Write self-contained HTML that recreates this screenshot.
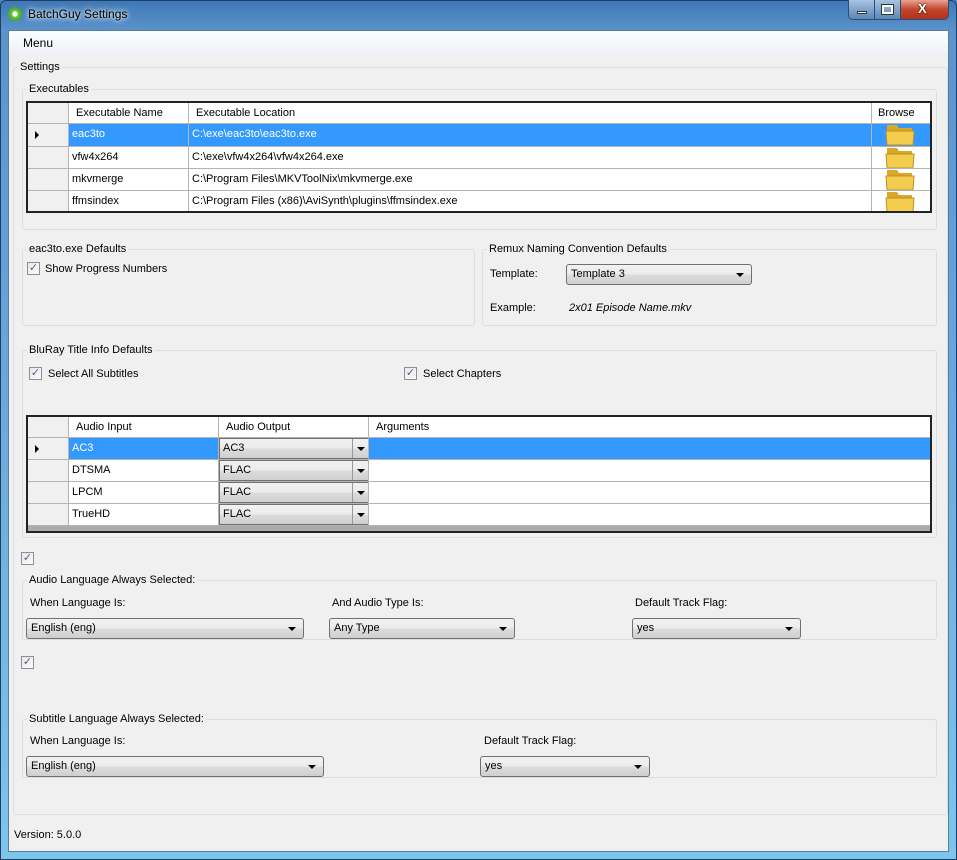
<!DOCTYPE html>
<html><head><meta charset="utf-8"><style>
*{box-sizing:border-box;margin:0;padding:0}
body{width:957px;height:860px;position:relative;overflow:hidden;font-family:"Liberation Sans",Arial,sans-serif;font-size:11px;color:#000;background:#4a86c0}
.a{position:absolute}
.frame{left:0;top:0;width:957px;height:860px;background:linear-gradient(180deg,#3f78b5 0,#5b93cb 30px,#6aa9dc 400px,#7cc6ec 860px);border:1px solid #1d3f66;border-radius:6px 6px 0 0}
.client{left:8px;top:30px;width:941px;height:822px;background:#f0f0f0;border:1px solid #5a7c9f}
.menu{left:9px;top:31px;width:939px;height:22px;background:linear-gradient(#fdfdfe,#eef2f7)}
.gb{position:absolute;border:1px solid #d5dfe5;border-radius:3px}
.gl{position:absolute;background:#f0f0f0;padding:0 2px;white-space:nowrap;line-height:14px}
.grid{position:absolute;border:2px solid #222;background:#ababab;overflow:hidden}
.row{position:absolute;left:0;height:23px;width:100%}
.c{position:absolute;top:0;height:100%;border-right:1px solid #b4b4b4;border-bottom:1px solid #b4b4b4;padding-left:3px;line-height:21px;white-space:nowrap;overflow:hidden;background:#fff}
.hdr .c{background:#fff;padding-left:7px}
.sel .c{background:#3399ff;color:#fff}
.sel .c.rh{background:#a6d2f6}
.rh{background:#f0f0f0!important}
.cb{position:absolute;width:13px;height:13px;border:1px solid #8e8f8f;background:linear-gradient(135deg,#e8e8e8,#fbfbfb);font-size:11px;line-height:11px;text-align:center;color:#4a5f97}
.combo{position:absolute;height:21px;border:1px solid #707070;border-radius:3px;background:linear-gradient(#f2f2f2 0,#ebebeb 50%,#dddddd 51%,#cfcfcf 100%);padding-left:4px;line-height:19px}
.combo:after{content:"";position:absolute;right:7px;top:8px;border-left:4px solid transparent;border-right:4px solid transparent;border-top:4px solid #000}
.gc{position:absolute;top:0;height:21px;border:1px solid #707070;background:linear-gradient(#f2f2f2 0,#ebebeb 50%,#dddddd 51%,#cfcfcf 100%);padding-left:3px;line-height:19px;color:#000}
.gc .btn{position:absolute;right:0;top:0;width:16px;height:19px;border-left:1px solid #999}
.gc .btn:after{content:"";position:absolute;left:4px;top:8px;border-left:4px solid transparent;border-right:4px solid transparent;border-top:4px solid #000}
.fold{position:absolute;left:12px;top:0px;width:32px;height:22px}
.arrow{position:absolute;left:7px;top:7px;border-top:4px solid transparent;border-bottom:4px solid transparent;border-left:4px solid #000}
</style></head><body>
<div class="a frame"></div>
<div class="a" style="left:8px;top:7px;width:14px;height:14px;border-radius:50%;background:radial-gradient(circle,#fff 25%,#6c3 30%,#2a8a2a 100%)"></div>
<div class="a" style="left:28px;top:7px;color:#000;font-size:12px;text-shadow:0 0 8px #fff,0 0 4px #fff">BatchGuy Settings</div>
<div class="a" style="left:848px;top:0;width:101px;height:20px;border:1px solid #2b4c74;border-top:none;border-radius:0 0 5px 5px;overflow:hidden">
<div class="a" style="left:0;top:0;width:26px;height:19px;background:linear-gradient(#a9c3e0,#5b86b8);border-right:1px solid #2b4c74"></div>
<div class="a" style="left:26px;top:0;width:26px;height:19px;background:linear-gradient(#a9c3e0,#5b86b8);border-right:1px solid #2b4c74"></div>
<div class="a" style="left:52px;top:0;width:49px;height:19px;background:linear-gradient(#e8a493,#c2452c 50%,#b3321a)"></div>
<div class="a" style="left:8px;top:11px;width:10px;height:3px;background:#fff;border:1px solid #333"></div>
<div class="a" style="left:33px;top:5px;width:11px;height:9px;border:2px solid #fff;outline:1px solid #333"></div>
<div class="a" style="left:69px;top:1px;color:#fff;font-weight:bold;font-size:13px;text-shadow:0 0 2px #000">X</div>
</div>
<div class="a client"></div>
<div class="a menu"></div>
<div class="a" style="left:23px;top:36px;font-size:12px">Menu</div>

<div class="gb" style="left:13px;top:67px;width:935px;height:748px"></div>
<div class="gl" style="left:18px;top:60px">Settings</div>

<div class="gb" style="left:22px;top:89px;width:915px;height:141px"></div>
<div class="gl" style="left:27px;top:82px">Executables</div>
<div class="grid" style="left:26px;top:101px;width:906px;height:112px">
<div class="row hdr" style="top:0;height:21px"><div class="c rh" style="left:0;width:41px"></div><div class="c" style="left:41px;width:120px">Executable Name</div><div class="c" style="left:161px;width:683px">Executable Location</div><div class="c" style="left:844px;width:60px;padding-left:6px">Browse</div></div>
<div class="row sel" style="top:21px"><div class="c rh" style="left:0;width:41px"><div class="arrow"></div></div><div class="c" style="left:41px;width:120px">eac3to</div><div class="c" style="left:161px;width:683px">C:\exe\eac3to\eac3to.exe</div><div class="c" style="left:844px;width:60px"><svg class="fold" viewBox="0 0 32 22"><path d="M3 1h10l2 3h13v17H3z" fill="#d9a72a"/><path d="M2 7h28l-1 14H3z" fill="#f4cd4e" stroke="#c18e1d"/></svg></div></div>
<div class="row" style="top:44px;height:22px"><div class="c rh" style="left:0;width:41px"></div><div class="c" style="left:41px;width:120px">vfw4x264</div><div class="c" style="left:161px;width:683px">C:\exe\vfw4x264\vfw4x264.exe</div><div class="c" style="left:844px;width:60px"><svg class="fold" viewBox="0 0 32 22"><path d="M3 1h10l2 3h13v17H3z" fill="#d9a72a"/><path d="M2 7h28l-1 14H3z" fill="#f4cd4e" stroke="#c18e1d"/></svg></div></div>
<div class="row" style="top:66px;height:22px"><div class="c rh" style="left:0;width:41px"></div><div class="c" style="left:41px;width:120px">mkvmerge</div><div class="c" style="left:161px;width:683px">C:\Program Files\MKVToolNix\mkvmerge.exe</div><div class="c" style="left:844px;width:60px"><svg class="fold" viewBox="0 0 32 22"><path d="M3 1h10l2 3h13v17H3z" fill="#d9a72a"/><path d="M2 7h28l-1 14H3z" fill="#f4cd4e" stroke="#c18e1d"/></svg></div></div>
<div class="row" style="top:88px;height:22px"><div class="c rh" style="left:0;width:41px"></div><div class="c" style="left:41px;width:120px">ffmsindex</div><div class="c" style="left:161px;width:683px">C:\Program Files (x86)\AviSynth\plugins\ffmsindex.exe</div><div class="c" style="left:844px;width:60px"><svg class="fold" viewBox="0 0 32 22"><path d="M3 1h10l2 3h13v17H3z" fill="#d9a72a"/><path d="M2 7h28l-1 14H3z" fill="#f4cd4e" stroke="#c18e1d"/></svg></div></div>
</div>

<div class="gb" style="left:22px;top:249px;width:453px;height:77px"></div>
<div class="gl" style="left:27px;top:242px">eac3to.exe Defaults</div>
<div class="cb" style="left:27px;top:262px">✓</div>
<div class="a" style="left:45px;top:263px">Show Progress Numbers</div>

<div class="gb" style="left:482px;top:249px;width:455px;height:77px"></div>
<div class="gl" style="left:487px;top:242px">Remux Naming Convention Defaults</div>
<div class="a" style="left:490px;top:268px">Template:</div>
<div class="combo" style="left:566px;top:264px;width:186px">Template 3</div>
<div class="a" style="left:490px;top:302px">Example:</div>
<div class="a" style="left:569px;top:302px;font-style:italic">2x01 Episode Name.mkv</div>

<div class="gb" style="left:22px;top:350px;width:915px;height:188px"></div>
<div class="gl" style="left:27px;top:343px">BluRay Title Info Defaults</div>
<div class="cb" style="left:29px;top:367px">✓</div>
<div class="a" style="left:48px;top:368px">Select All Subtitles</div>
<div class="cb" style="left:404px;top:367px">✓</div>
<div class="a" style="left:423px;top:368px">Select Chapters</div>
<div class="grid" style="left:26px;top:415px;width:906px;height:118px">
<div class="row hdr" style="top:0;height:21px"><div class="c rh" style="left:0;width:41px"></div><div class="c" style="left:41px;width:150px">Audio Input</div><div class="c" style="left:191px;width:150px">Audio Output</div><div class="c" style="left:341px;width:563px">Arguments</div></div>
<div class="row sel" style="top:21px;height:22px"><div class="c rh" style="left:0;width:41px"><div class="arrow"></div></div><div class="c" style="left:41px;width:150px">AC3</div><div class="c" style="left:191px;width:150px;padding:0"><div class="gc" style="left:0;width:150px">AC3<div class="btn"></div></div></div><div class="c" style="left:341px;width:563px"></div></div>
<div class="row" style="top:43px;height:22px"><div class="c rh" style="left:0;width:41px"></div><div class="c" style="left:41px;width:150px">DTSMA</div><div class="c" style="left:191px;width:150px;padding:0"><div class="gc" style="left:0;width:150px">FLAC<div class="btn"></div></div></div><div class="c" style="left:341px;width:563px"></div></div>
<div class="row" style="top:65px;height:22px"><div class="c rh" style="left:0;width:41px"></div><div class="c" style="left:41px;width:150px">LPCM</div><div class="c" style="left:191px;width:150px;padding:0"><div class="gc" style="left:0;width:150px">FLAC<div class="btn"></div></div></div><div class="c" style="left:341px;width:563px"></div></div>
<div class="row" style="top:87px;height:22px"><div class="c rh" style="left:0;width:41px"></div><div class="c" style="left:41px;width:150px">TrueHD</div><div class="c" style="left:191px;width:150px;padding:0"><div class="gc" style="left:0;width:150px">FLAC<div class="btn"></div></div></div><div class="c" style="left:341px;width:563px"></div></div>
</div>

<div class="cb" style="left:21px;top:552px">✓</div>
<div class="gb" style="left:22px;top:580px;width:915px;height:60px"></div>
<div class="gl" style="left:27px;top:573px">Audio Language Always Selected:</div>
<div class="a" style="left:30px;top:597px">When Language Is:</div>
<div class="a" style="left:332px;top:597px">And Audio Type Is:</div>
<div class="a" style="left:635px;top:597px">Default Track Flag:</div>
<div class="combo" style="left:26px;top:618px;width:278px">English (eng)</div>
<div class="combo" style="left:329px;top:618px;width:186px">Any Type</div>
<div class="combo" style="left:632px;top:618px;width:169px">yes</div>

<div class="cb" style="left:21px;top:656px">✓</div>
<div class="gb" style="left:22px;top:719px;width:915px;height:59px"></div>
<div class="gl" style="left:27px;top:712px">Subtitle Language Always Selected:</div>
<div class="a" style="left:30px;top:735px">When Language Is:</div>
<div class="a" style="left:484px;top:735px">Default Track Flag:</div>
<div class="combo" style="left:26px;top:756px;width:298px">English (eng)</div>
<div class="combo" style="left:480px;top:756px;width:170px">yes</div>

<div class="a" style="left:14px;top:829px">Version: 5.0.0</div>
</body></html>
